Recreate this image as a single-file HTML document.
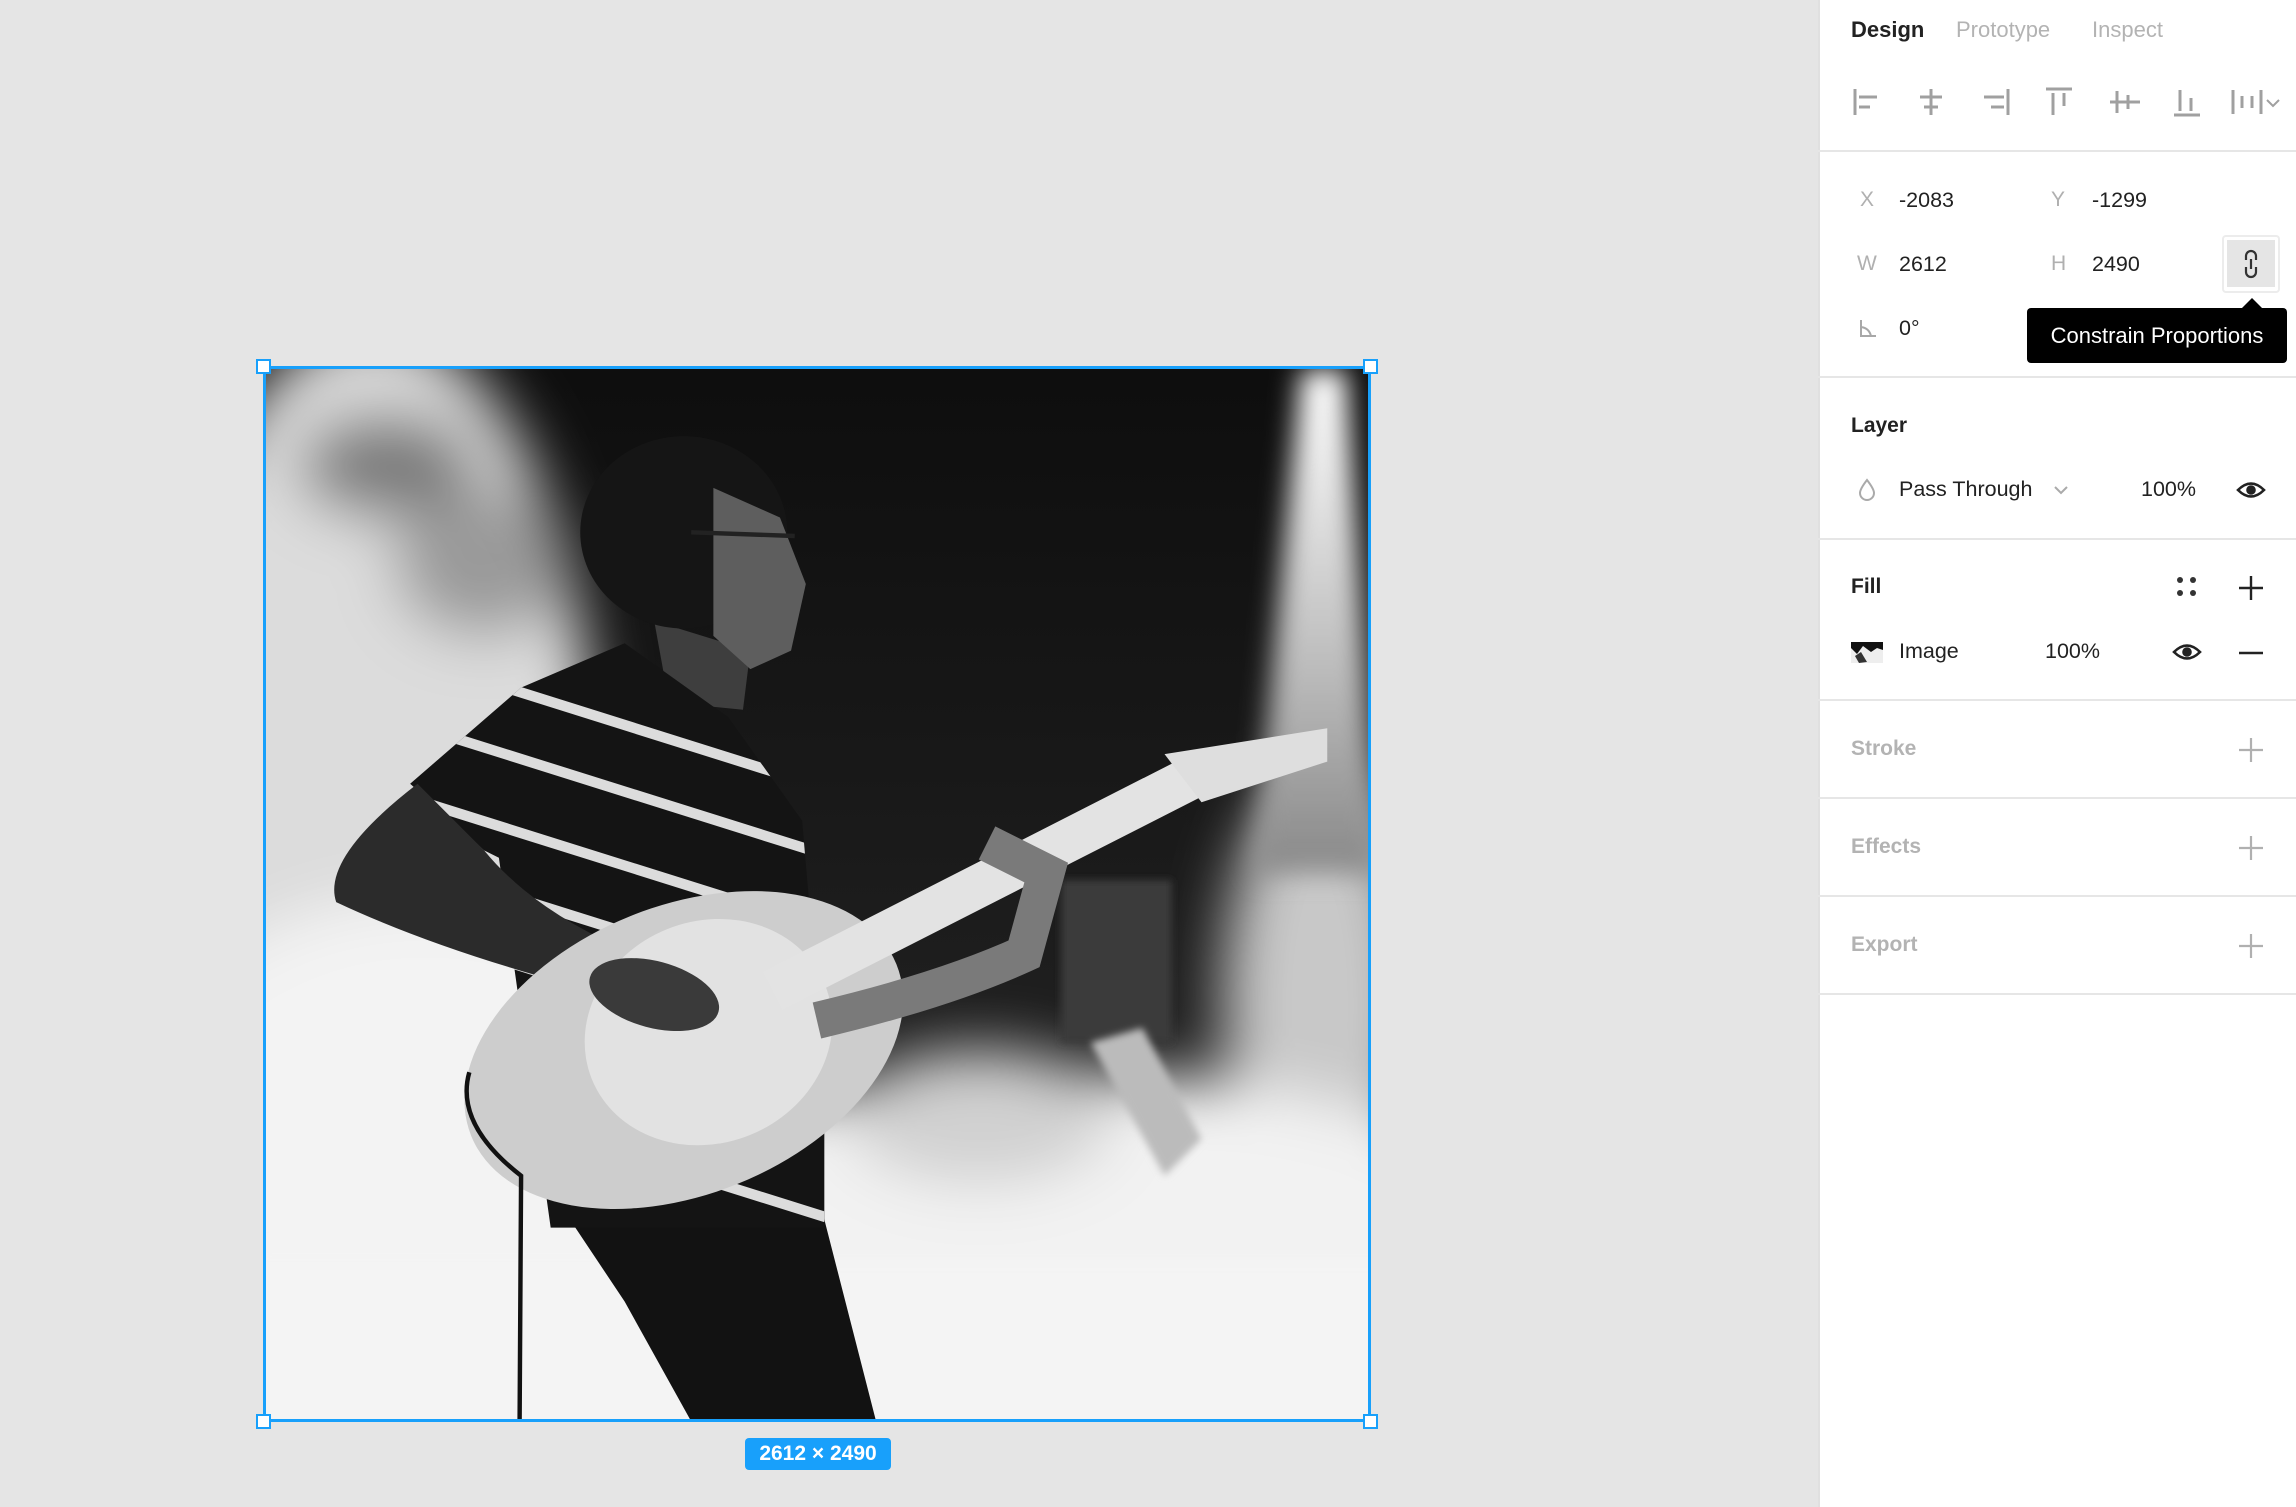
<!DOCTYPE html>
<html><head><meta charset="utf-8"><style>
*{margin:0;padding:0;box-sizing:border-box}
body{width:2296px;height:1507px;background:#e5e5e5;position:relative;overflow:hidden;font-family:"Liberation Sans",sans-serif}
.a{position:absolute;white-space:nowrap}
.panel{position:absolute;left:1818px;top:0;width:478px;height:1507px;background:#fff;border-left:2px solid #e0e0e0}
.hr{position:absolute;left:1818px;width:478px;height:2px;background:#e6e6e6}
.t{font-size:21.5px;color:#222}
.lbl{font-size:21px;color:#b0b0b0}
.h{font-size:21px;font-weight:bold;color:#222}
.hg{font-size:21px;font-weight:bold;color:#b3b3b3}
</style></head><body>

<svg class="a" style="left:264px;top:368px" width="1106" height="1053" viewBox="32.4 37.9 1495.4 1423.6" preserveAspectRatio="none">
<defs>
<filter id="b40" x="-50%" y="-50%" width="200%" height="200%"><feGaussianBlur stdDeviation="40"/></filter>
<filter id="b20" x="-50%" y="-50%" width="200%" height="200%"><feGaussianBlur stdDeviation="18"/></filter>
<filter id="b6"><feGaussianBlur stdDeviation="5"/></filter>
<linearGradient id="beam" x1="0" y1="0" x2="0" y2="1"><stop offset="0" stop-color="#fff"/><stop offset=".6" stop-color="#bbb"/><stop offset="1" stop-color="#888"/></linearGradient>
<linearGradient id="bg" x1="0" y1="0" x2="0" y2="1"><stop offset="0" stop-color="#0d0d0d"/><stop offset="1" stop-color="#2a2a2a"/></linearGradient>
<clipPath id="torso"><polygon points="230,600 380,470 520,410 660,510 760,650 790,1000 790,1200 420,1200 350,700 330,690"/></clipPath>
</defs>
<rect x="0" y="0" width="1600" height="1500" fill="url(#bg)"/>
<g filter="url(#b40)">
<ellipse cx="180" cy="620" rx="300" ry="640" fill="#dcdcdc"/>
<ellipse cx="330" cy="300" rx="120" ry="100" fill="#9a9a9a"/>
<ellipse cx="200" cy="170" rx="120" ry="70" fill="#7a7a7a"/>
<ellipse cx="1460" cy="900" rx="130" ry="320" fill="#c8c8c8"/>
<ellipse cx="1100" cy="1250" rx="700" ry="260" fill="#f2f2f2"/>
<ellipse cx="250" cy="1150" rx="450" ry="400" fill="#f3f3f3"/>
<ellipse cx="1000" cy="1050" rx="180" ry="90" fill="#d0d0d0"/>
</g>
<rect x="0" y="1250" width="1600" height="300" fill="#f4f4f4" filter="url(#b20)"/>
<polygon points="1435,40 1495,40 1540,720 1370,720" fill="url(#beam)" filter="url(#b20)"/>
<rect x="1110" y="730" width="150" height="220" fill="#3a3a3a" filter="url(#b6)"/>
<path d="M1150 950 L1220 930 L1300 1080 L1250 1130 Z" fill="#bbb" filter="url(#b6)"/>
<polygon points="420,1150 780,1150 860,1462 610,1462 520,1300" fill="#121212"/>
<polygon points="560,380 690,420 680,500 580,490" fill="#3e3e3e"/>
<ellipse cx="600" cy="260" rx="140" ry="130" fill="#151515"/>
<path d="M640 200 L730 240 L765 330 L745 420 L690 445 L640 400 Z" fill="#5e5e5e"/>
<path d="M610 260 L750 265" stroke="#222" stroke-width="6"/>
<polygon points="230,600 380,470 520,410 660,510 760,650 790,1000 790,1200 420,1200 350,700 330,690" fill="#141414"/>
<g clip-path="url(#torso)" stroke="#dcdcdc" stroke-width="14">
<line x1="200" y1="420" x2="900" y2="640"/>
<line x1="200" y1="510" x2="900" y2="730"/>
<line x1="200" y1="610" x2="900" y2="830"/>
<line x1="200" y1="700" x2="900" y2="920"/>
<line x1="200" y1="790" x2="900" y2="1010"/>
<line x1="200" y1="1000" x2="900" y2="1220"/>
</g>
<path d="M240 600 Q110 700 130 760 Q300 840 560 900 L620 860 Q420 800 330 690 Z" fill="#2b2b2b"/>
<g transform="rotate(-22 600 960)">
<ellipse cx="600" cy="960" rx="310" ry="195" fill="#cdcdcd"/>
<ellipse cx="640" cy="950" rx="170" ry="150" fill="#e2e2e2"/>
</g>
<line x1="720" y1="880" x2="1290" y2="590" stroke="#e3e3e3" stroke-width="58"/>
<polygon points="1250,560 1470,525 1470,570 1300,625" fill="#dedede"/>
<path d="M780 920 Q950 880 1060 830 L1090 720 L1010 680" stroke="#7a7a7a" stroke-width="50" fill="none"/>
<ellipse cx="560" cy="885" rx="90" ry="45" fill="#3a3a3a" transform="rotate(15 560 885)"/>
<path d="M310 990 Q290 1060 380 1130 L378 1462" stroke="#111" stroke-width="6" fill="none"/>
</svg>

<div class="a" style="left:263px;top:366px;width:1108px;height:1056px;border:3px solid #18a0fb"></div>
<div class="a" style="left:256px;top:359px;width:15px;height:15px;background:#fff;border:2px solid #18a0fb"></div>
<div class="a" style="left:1363px;top:359px;width:15px;height:15px;background:#fff;border:2px solid #18a0fb"></div>
<div class="a" style="left:256px;top:1414px;width:15px;height:15px;background:#fff;border:2px solid #18a0fb"></div>
<div class="a" style="left:1363px;top:1414px;width:15px;height:15px;background:#fff;border:2px solid #18a0fb"></div>
<div class="a" style="left:745px;top:1438px;width:146px;height:32px;background:#18a0fb;border-radius:4px;color:#fff;font-size:21px;font-weight:bold;text-align:center;line-height:32px">2612 × 2490</div>

<div class="panel"></div>
<div class="a h" style="left:1851px;top:17px;font-size:22px">Design</div>
<div class="a hg" style="left:1956px;top:17px;font-size:22px;font-weight:normal">Prototype</div>
<div class="a hg" style="left:2092px;top:17px;font-size:22px;font-weight:normal">Inspect</div>

<svg class="a" style="left:1850px;top:86px" width="440" height="32" fill="none" stroke="#a0a0a0" stroke-width="3">
<path d="M5 3V29M9 11H27M9 21H20"/>
<path d="M81 3V29M70 11H92M74 21H88"/>
<path d="M158 3V29M134 11H154M141 21H154"/>
<path d="M196 3H222M203 7V29M214 7V20"/>
<path d="M260 16H290M267 5V27M278 9V23"/>
<path d="M324 29H350M330 4V25M341 12V25"/>
<path d="M383 4V28M411 4V28M392 10V22M402 10V22"/>
<path d="M417 14L423 20L429 14" stroke-width="2"/>
</svg>
<div class="hr" style="top:150px"></div>

<div class="a lbl" style="left:1860px;top:188px">X</div>
<div class="a t" style="left:1899px;top:188px">-2083</div>
<div class="a lbl" style="left:2051px;top:188px">Y</div>
<div class="a t" style="left:2092px;top:188px">-1299</div>
<div class="a lbl" style="left:1857px;top:252px">W</div>
<div class="a t" style="left:1899px;top:252px">2612</div>
<div class="a lbl" style="left:2051px;top:252px">H</div>
<div class="a t" style="left:2092px;top:252px">2490</div>
<svg class="a" style="left:1859px;top:318px" width="18" height="20" fill="none" stroke="#a8a8a8" stroke-width="2"><path d="M2 2V18H17M2 9Q10 10 12 18"/></svg>
<div class="a t" style="left:1899px;top:316px">0°</div>

<div class="a" style="left:2222px;top:235px;width:58px;height:58px;border:2px solid #ececec;border-radius:4px;background:#fff"></div>
<div class="a" style="left:2227px;top:240px;width:48px;height:47px;background:#e5e5e5"></div>
<svg class="a" style="left:2240px;top:249px" width="22" height="30" fill="none" stroke="#333" stroke-width="2.2"><path d="M6 11V7A5 5 0 0 1 16 7V11M6 18V23A5 5 0 0 0 16 23V18M11 10V20"/></svg>

<div class="a" style="left:2027px;top:308px;width:260px;height:55px;background:#000;border-radius:4px;color:#fff;font-size:22px;line-height:55px;text-align:center">Constrain Proportions</div>
<div class="a" style="left:2241px;top:298px;width:0;height:0;border-left:11px solid transparent;border-right:11px solid transparent;border-bottom:11px solid #000"></div>
<div class="hr" style="top:376px"></div>

<div class="a h" style="left:1851px;top:414px">Layer</div>
<svg class="a" style="left:1858px;top:478px" width="18" height="24" fill="none" stroke="#aaa" stroke-width="2"><path d="M9 2Q2 11 2 15A7 7 0 0 0 16 15Q16 11 9 2Z"/></svg>
<div class="a t" style="left:1899px;top:477px">Pass Through</div>
<svg class="a" style="left:2053px;top:484px" width="16" height="12" fill="none" stroke="#aaa" stroke-width="2"><path d="M2 3L8 9L14 3"/></svg>
<div class="a t" style="left:2141px;top:477px">100%</div>
<svg class="a" style="left:2236px;top:479px" width="30" height="22" fill="none" stroke="#222" stroke-width="2.6"><path d="M2 11Q15 -2 28 11Q15 24 2 11Z"/><circle cx="15" cy="11" r="3.5" fill="#222"/></svg>
<div class="hr" style="top:538px"></div>

<div class="a h" style="left:1851px;top:575px">Fill</div>
<svg class="a" style="left:2176px;top:576px" width="22" height="22" fill="#333"><circle cx="4" cy="4" r="3"/><circle cx="17" cy="4" r="3"/><circle cx="4" cy="17" r="3"/><circle cx="17" cy="17" r="3"/></svg>
<svg class="a" style="left:2238px;top:575px" width="26" height="26" stroke="#222" stroke-width="2.4"><path d="M13 1V25M1 13H25"/></svg>
<svg class="a" style="left:1851px;top:642px" width="32" height="21"><rect width="32" height="21" fill="#eee"/><path d="M0 0H32V8L26 6L20 10L12 4L6 12L0 6Z" fill="#111"/><path d="M4 14L10 10L16 20L8 21Z" fill="#333"/></svg>
<div class="a t" style="left:1899px;top:639px">Image</div>
<div class="a t" style="left:2045px;top:639px">100%</div>
<svg class="a" style="left:2172px;top:641px" width="30" height="22" fill="none" stroke="#222" stroke-width="2.6"><path d="M2 11Q15 -2 28 11Q15 24 2 11Z"/><circle cx="15" cy="11" r="3.5" fill="#222"/></svg>
<svg class="a" style="left:2238px;top:640px" width="26" height="26" stroke="#222" stroke-width="2.4"><path d="M1 13H25"/></svg>
<div class="hr" style="top:699px"></div>

<div class="a hg" style="left:1851px;top:737px">Stroke</div>
<svg class="a" style="left:2238px;top:737px" width="26" height="26" stroke="#b0b0b0" stroke-width="2.2"><path d="M13 1V25M1 13H25"/></svg>
<div class="hr" style="top:797px"></div>
<div class="a hg" style="left:1851px;top:835px">Effects</div>
<svg class="a" style="left:2238px;top:835px" width="26" height="26" stroke="#b0b0b0" stroke-width="2.2"><path d="M13 1V25M1 13H25"/></svg>
<div class="hr" style="top:895px"></div>
<div class="a hg" style="left:1851px;top:933px">Export</div>
<svg class="a" style="left:2238px;top:933px" width="26" height="26" stroke="#b0b0b0" stroke-width="2.2"><path d="M13 1V25M1 13H25"/></svg>
<div class="hr" style="top:993px"></div>
</body></html>
